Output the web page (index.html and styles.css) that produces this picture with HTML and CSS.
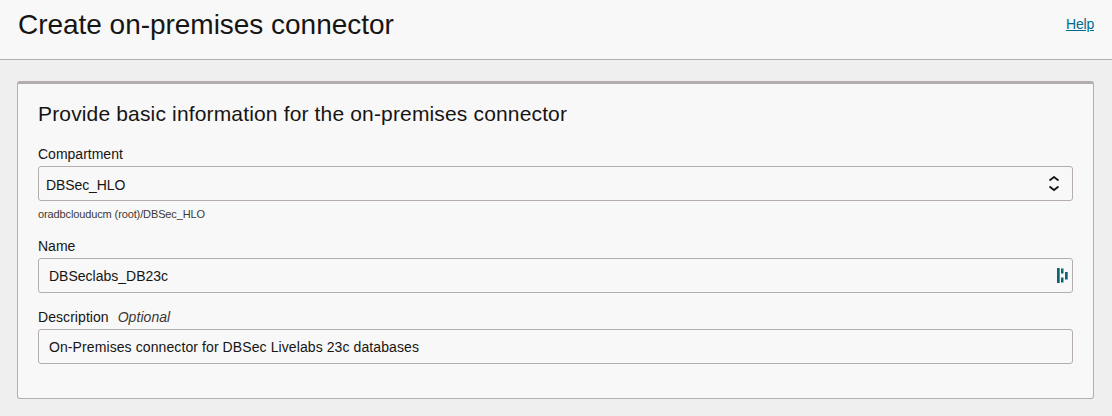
FILE: index.html
```html
<!DOCTYPE html>
<html lang="en">
<head>
<meta charset="utf-8">
<title>Create on-premises connector</title>
<link rel="stylesheet" href="styles.css">
</head>
<body>
<header class="header">
  <h1 class="title">Create on-premises connector</h1>
  <a class="help" href="#">Help</a>
</header>
<main class="panel">
  <h2 class="heading">Provide basic information for the on-premises connector</h2>
  <div class="label">Compartment</div>
  <div class="field select"><span class="select-value">DBSec_HLO</span>
    <svg class="arrows" width="12" height="16" viewBox="0 0 12 16"><path d="M1.500 4.500 6 1 10.500 4.500M1.500 10.500 6 14 10.500 10.500"/></svg>
  </div>
  <div class="hint">oradbclouducm (root)/DBSec_HLO</div>
  <div class="label name-label">Name</div>
  <div class="field"><span>DBSeclabs_DB23c</span>
    <svg class="manager" width="11" height="15" viewBox="0 0 11 15"><path d="M0 0h2.700v15H0zM4 .5h2.500v5H4zM4 9.500h2.500v5H4zM8 4h2.700v7.500H8z"/></svg>
  </div>
  <div class="label desc-label">Description <em class="optional">Optional</em></div>
  <div class="field"><span class="description">On-Premises connector for DBSec Livelabs 23c databases</span></div>
</main>
</body>
</html>
```
FILE: styles.css
```css
* { box-sizing: border-box; }
body { margin: 0; height: 416px; overflow: hidden; background: #efefef; color: #161513; font: 14px/18px "Liberation Sans", Arial, sans-serif; }
.header { display: flex; justify-content: space-between; height: 60px; padding: 8px 18px 0; background: #f8f8f8; border-bottom: 1px solid #b5adad; }
.title { margin: 0; font-size: 28px; line-height: 34px; font-weight: 400; letter-spacing: -.03px; }
.help { margin-top: 7px; color: #006b8f; letter-spacing: -.2px; }
.panel { height: 318px; margin: 21px 18px 0 17px; padding: 17px 20px 0; background: #f8f8f8; border: 1px solid #b5adad; border-top-width: 3px; border-radius: 3px; }
.heading { margin: 0 0 18px; font-size: 21px; line-height: 26px; font-weight: 400; letter-spacing: .155px; }
.label { height: 18px; margin-bottom: 3px; }
.field { display: flex; align-items: center; justify-content: space-between; height: 35px; padding: 0 4px 0 10px; border: 1px solid #b5adad; border-radius: 3px; }
.select { padding: 0 12px 0 7px; }
.select-value { padding-top: 2px; letter-spacing: -.1px; }
.description { letter-spacing: .094px; }
.hint { margin-top: 7px; font-size: 11px; line-height: 13px; letter-spacing: -.12px; color: #3b3937; }
.name-label { margin-top: 16px; }
.desc-label { margin-top: 15px; letter-spacing: .06px; }
.optional { margin-left: 5px; color: #3b3937; }
.arrows { fill: none; stroke: #161513; stroke-width: 1.8; }
.manager { fill: #0e6572; }
```
